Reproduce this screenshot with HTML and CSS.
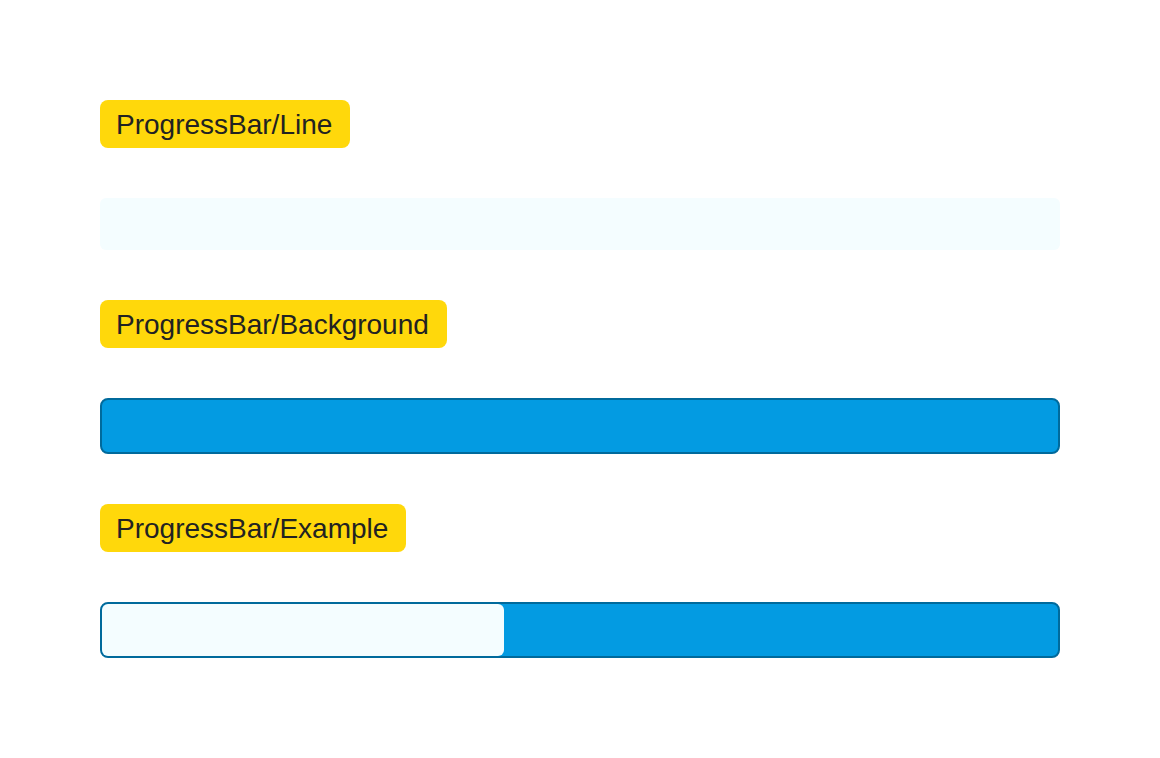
FILE: index.html
```html
<!DOCTYPE html>
<html lang="en">
<head>
<meta charset="utf-8">
<title>ProgressBar</title>
<link rel="stylesheet" href="styles.css">
</head>
<body>
<main class="page">
  <section class="group">
    <h2 class="tag" id="line">ProgressBar/Line</h2>
    <div class="line"></div>
  </section>
  <section class="group">
    <h2 class="tag" id="background">ProgressBar/Background</h2>
    <div class="track"></div>
  </section>
  <section class="group">
    <h2 class="tag" id="example">ProgressBar/Example</h2>
    <div class="track" role="progressbar" aria-labelledby="example" aria-valuemin="0" aria-valuemax="100" aria-valuenow="42">
      <div class="line" style="width: 42%"></div>
    </div>
  </section>
</main>
</body>
</html>
```

FILE: styles.css
```css
* {
  box-sizing: border-box;
}

body {
  margin: 0;
  background: #ffffff;
  color: #222222;
  font-family: "Liberation Sans", Arial, sans-serif;
}

.page,
.group {
  display: flex;
  flex-direction: column;
  gap: 50px;
}

.page {
  padding: 100px;
}

.tag {
  align-self: flex-start;
  margin: 0;
  padding: 9px 18px 7px 16px;
  border-radius: 8px;
  background: #ffd80b;
  font-size: 28px;
  font-weight: 400;
  line-height: 32px;
}

.line {
  height: 52px;
  border-radius: 6px;
  background: #f4fdff;
}

.track {
  height: 56px;
  border: 2px solid #006a9c;
  border-radius: 8px;
  background: #039be2;
}
```
